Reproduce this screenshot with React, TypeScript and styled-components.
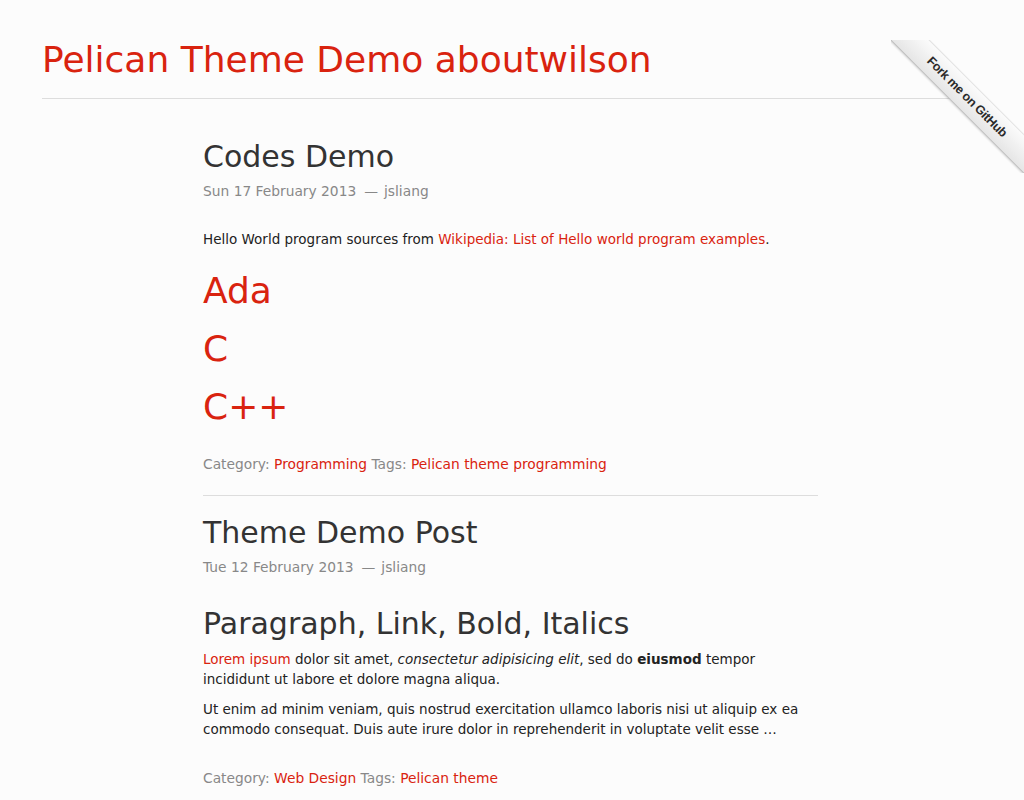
import React from 'react';
import styled, { createGlobalStyle } from 'styled-components';

const RED = '#d9230f';

const GlobalStyle = createGlobalStyle`
  html, body {
    margin: 0;
    padding: 0;
    background: #fcfcfc;
  }
  body {
    font-family: 'DejaVu Sans', Verdana, sans-serif;
    font-size: 13.5px;
    line-height: 20px;
    color: #222;
  }
`;

const StyledPage = styled.div`
  position: relative;
  width: 100%;
  min-height: 800px;
  overflow: hidden;
`;

const StyledContainer = styled.div`
  width: 940px;
  margin: 0 auto;
`;

const StyledHeader = styled.header`
  padding: 40px 0 18px;
  border-bottom: 1px solid #ddd;
`;

const StyledSiteTitle = styled.a`
  display: block;
  font-size: 36px;
  line-height: 40px;
  color: ${RED};
  text-decoration: none;
`;

const StyledMain = styled.main`
  width: 615px;
  margin-left: 161px;
  padding-top: 21px;
`;

const StyledArticle = styled.article<{ $last?: boolean }>`
  padding: 19px 0 21px;
  border-bottom: ${(p) => (p.$last ? 'none' : '1px solid #ddd')};
`;

const StyledPostTitle = styled.h2`
  margin: 0;
  font-size: 30px;
  line-height: 36px;
  font-weight: normal;
  color: #333;
`;

const StyledMeta = styled.div`
  margin: 6px 0 28px;
  font-size: 13.8px;
  color: #888;
`;

const StyledDash = styled.span`
  margin: 0 6px 0 8px;
`;

const StyledLink = styled.a`
  color: ${RED};
  text-decoration: none;
`;

const StyledParagraph = styled.p`
  margin: 0 0 10px;
`;

const StyledLangHeading = styled.h1`
  margin: 18px 0;
  font-size: 36px;
  line-height: 40px;
  font-weight: normal;
  color: ${RED};

  ${StyledParagraph} + & {
    margin-top: 22px;
  }
`;

const StyledSection = styled.h2`
  margin: 0 0 8px;
  padding-top: 2px;
  font-size: 30px;
  line-height: 34px;
  font-weight: normal;
  color: #333;
`;

const StyledFooter = styled.footer<{ $gap: number }>`
  margin-top: ${(p) => p.$gap}px;
  font-size: 13.8px;
  color: #888;
`;

const StyledRibbonWrap = styled.div`
  position: absolute;
  top: 40px;
  right: 0;
  width: 133px;
  height: 133px;
  overflow: hidden;
  pointer-events: none;
`;

const StyledRibbon = styled.a`
  position: absolute;
  left: -24px;
  top: 43px;
  width: 200px;
  height: 26px;
  transform: rotate(45deg);
  background: linear-gradient(#fbfbfb, #e6e6e6);
  border-top: 1px solid #e2e2e2;
  border-bottom: 1px solid #bdbdbd;
  box-shadow: 0 1px 2px rgba(0, 0, 0, 0.15);
  display: flex;
  align-items: center;
  justify-content: center;
  font-family: 'Liberation Sans', Arial, sans-serif;
  font-weight: bold;
  font-size: 12.5px;
  color: #2a2a2a;
  text-decoration: none;
  letter-spacing: -0.3px;
`;

function Meta({ date }: { date: string }): JSX.Element {
  return (
    <StyledMeta>
      {date}
      <StyledDash>—</StyledDash>
      jsliang
    </StyledMeta>
  );
}

function App(): JSX.Element {
  return (
    <StyledPage>
      <GlobalStyle />
      <StyledContainer>
        <StyledHeader>
          <StyledSiteTitle href="#">Pelican Theme Demo aboutwilson</StyledSiteTitle>
        </StyledHeader>

        <StyledMain>
          <StyledArticle>
            <StyledPostTitle>Codes Demo</StyledPostTitle>
            <Meta date="Sun 17 February 2013" />
            <StyledParagraph>
              Hello World program sources from{' '}
              <StyledLink href="#">Wikipedia: List of Hello world program examples</StyledLink>.
            </StyledParagraph>
            <StyledLangHeading>Ada</StyledLangHeading>
            <StyledLangHeading>C</StyledLangHeading>
            <StyledLangHeading>C++</StyledLangHeading>
            <StyledFooter $gap={27}>
              Category: <StyledLink href="#">Programming</StyledLink> Tags:{' '}
              <StyledLink href="#">Pelican theme programming</StyledLink>
            </StyledFooter>
          </StyledArticle>

          <StyledArticle $last>
            <StyledPostTitle>Theme Demo Post</StyledPostTitle>
            <Meta date="Tue 12 February 2013" />
            <StyledSection>Paragraph, Link, Bold, Italics</StyledSection>
            <StyledParagraph>
              <StyledLink href="#">Lorem ipsum</StyledLink> dolor sit amet,{' '}
              <em>consectetur adipisicing elit</em>, sed do <strong>eiusmod</strong> tempor
              incididunt ut labore et dolore magna aliqua.
            </StyledParagraph>
            <StyledParagraph>
              Ut enim ad minim veniam, quis nostrud exercitation ullamco laboris nisi ut aliquip ex
              ea commodo consequat. Duis aute irure dolor in reprehenderit in voluptate velit esse …
            </StyledParagraph>
            <StyledFooter $gap={29}>
              Category: <StyledLink href="#">Web Design</StyledLink> Tags:{' '}
              <StyledLink href="#">Pelican theme</StyledLink>
            </StyledFooter>
          </StyledArticle>
        </StyledMain>
      </StyledContainer>

      <StyledRibbonWrap>
        <StyledRibbon href="#">Fork me on GitHub</StyledRibbon>
      </StyledRibbonWrap>
    </StyledPage>
  );
}

export default App;
